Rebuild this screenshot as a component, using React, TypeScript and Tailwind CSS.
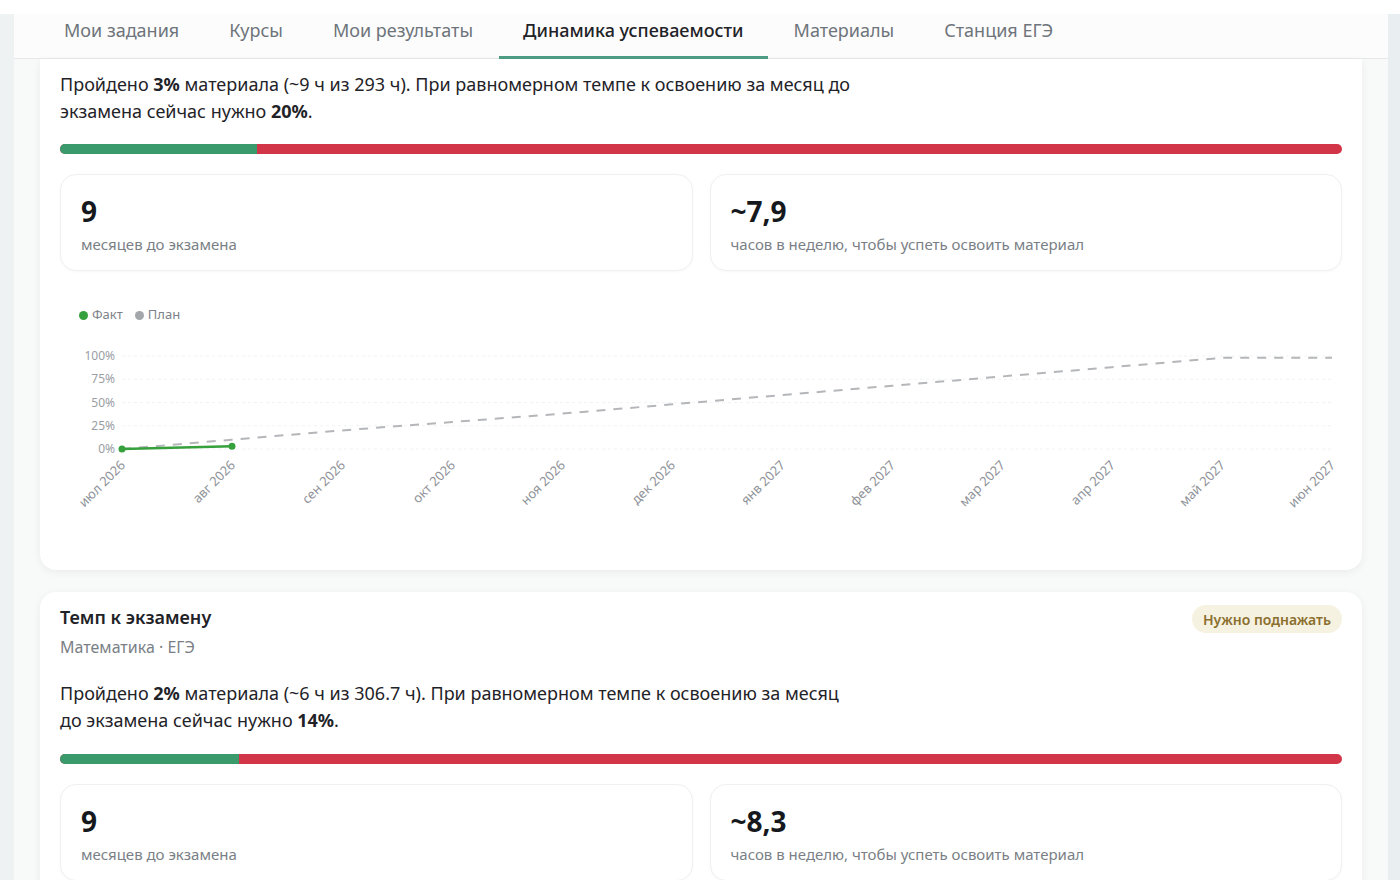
import React from "react";

const FONT = { fontFamily: '"Noto Sans", "Open Sans", Arial, sans-serif' };

const tabs = [
  "Мои задания",
  "Курсы",
  "Мои результаты",
  "Динамика успеваемости",
  "Материалы",
  "Станция ЕГЭ",
];

const months = [
  "июл 2026",
  "авг 2026",
  "сен 2026",
  "окт 2026",
  "ноя 2026",
  "дек 2026",
  "янв 2027",
  "фев 2027",
  "мар 2027",
  "апр 2027",
  "май 2027",
  "июн 2027",
];

const plan = [0, 10, 20, 29, 38, 48, 58, 68, 78, 88, 98, 98];
const fact = [0, 3];

function ProgressBar({ done }: { done: number }) {
  return (
    <div className="flex h-[10px] w-full overflow-hidden rounded-full bg-[#d23547]">
      <div className="h-full bg-[#3b9a6c]" style={{ width: `${done}%` }} />
    </div>
  );
}

function StatCard({ value, label }: { value: string; label: string }) {
  return (
    <div className="flex h-[97px] flex-col rounded-2xl border border-[#eef0f2] bg-white px-5 pt-[19px] shadow-[0_1px_3px_rgba(0,0,0,0.03)]">
      <div className="text-[28px] font-bold leading-[34px] text-[#15181c]">{value}</div>
      <div className="mt-[6px] text-[15px] leading-[20px] text-[#7a7f86]">{label}</div>
    </div>
  );
}

function Chart() {
  const W = 1282;
  const H = 200;
  const x0 = 62;
  const step = 110;
  const yTop = 26; // 100%
  const yZero = 119; // 0%
  const yOf = (v: number) => yZero - ((yZero - yTop) * v) / 100;
  const xOf = (i: number) => x0 + i * step;
  const planPath = plan.map((v, i) => `${i === 0 ? "M" : "L"}${xOf(i)},${yOf(v)}`).join(" ");
  const factPath = fact.map((v, i) => `${i === 0 ? "M" : "L"}${xOf(i)},${yOf(v)}`).join(" ");
  return (
    <svg width={W} height={H} viewBox={`0 0 ${W} ${H}`} className="block">
      {[100, 75, 50, 25, 0].map((t) => (
        <g key={t}>
          <line
            x1={x0}
            x2={xOf(11)}
            y1={yOf(t)}
            y2={yOf(t)}
            stroke="#f1f2f3"
            strokeWidth={1}
            strokeDasharray="3 3"
          />
          <text
            x={x0 - 7}
            y={yOf(t) + 4}
            textAnchor="end"
            fontSize={12}
            fill="#9a9ea4"
            style={FONT}
          >
            {t}%
          </text>
        </g>
      ))}
      <path d={planPath} fill="none" stroke="#b4b6b9" strokeWidth={2} strokeDasharray="9 8" />
      <path d={factPath} fill="none" stroke="#36a03c" strokeWidth={2.5} />
      {fact.map((v, i) => (
        <circle key={i} cx={xOf(i)} cy={yOf(v)} r={3.5} fill="#36a03c" />
      ))}
      {months.map((m, i) => (
        <text
          key={m}
          x={xOf(i) + 4}
          y={yZero + 17}
          textAnchor="end"
          fontSize={13}
          fill="#8f9399"
          transform={`rotate(-45 ${xOf(i) + 4} ${yZero + 17})`}
          style={FONT}
        >
          {m}
        </text>
      ))}
    </svg>
  );
}

export default function App() {
  return (
    <div className="h-[880px] w-[1400px] overflow-hidden bg-white text-[#1f2328]" style={FONT}>
      <div className="h-[14px] bg-white" />
      <div className="flex h-[866px]">
        <div className="w-[14px] bg-[#eef2f3]" />
        <div className="flex w-[1374px] flex-col bg-[#f8f9f9]">
          {/* tabs */}
          <div className="flex h-[45px] shrink-0 items-stretch border-b border-[#e6e8ea] bg-[#fcfcfc] pl-[26px]">
            {tabs.map((t) => {
              const active = t === "Динамика успеваемости";
              return (
                <div
                  key={t}
                  className={
                    active
                      ? "relative mr-[2px] flex items-center px-6 pb-[11px] text-[18px] font-medium text-[#1f2328]"
                      : "relative mr-[2px] flex items-center px-6 pb-[11px] text-[18px] text-[#6e747b]"
                  }
                >
                  {t}
                  {active && (
                    <div className="absolute bottom-[-1px] left-0 right-0 h-[3px] bg-[#4c9c84]" />
                  )}
                </div>
              );
            })}
          </div>

          <div className="flex flex-col px-[26px]">
            {/* first pace card, scrolled under the tabs */}
            <div className="rounded-b-2xl bg-white px-5 pb-10 pt-3 shadow-[0_2px_8px_rgba(0,0,0,0.06)]">
              <p className="text-[18px] leading-[27px] text-[#1f2328]">
                Пройдено <b>3%</b> материала (~9 ч из 293 ч). При равномерном темпе к освоению за месяц до
                <br />
                экзамена сейчас нужно <b>20%</b>.
              </p>
              <div className="mt-[19px]">
                <ProgressBar done={15.4} />
              </div>
              <div className="mt-5 grid grid-cols-2 gap-[17px]">
                <StatCard value="9" label="месяцев до экзамена" />
                <StatCard value="~7,9" label="часов в неделю, чтобы успеть освоить материал" />
              </div>
              <div className="mt-[36px] flex h-4 items-center gap-[12px] pl-[19px] text-[13px] text-[#7d828a]">
                <div className="flex items-center gap-[4px]">
                  <span className="h-[9px] w-[9px] rounded-full bg-[#36a03c]" />
                  Факт
                </div>
                <div className="flex items-center gap-[4px]">
                  <span className="h-[9px] w-[9px] rounded-full bg-[#a3a6aa]" />
                  План
                </div>
              </div>
              <div className="mt-[7px]">
                <Chart />
              </div>
            </div>

            {/* second pace card */}
            <div className="mt-[22px] rounded-2xl bg-white px-5 pb-8 pt-3 shadow-[0_2px_8px_rgba(0,0,0,0.06)]">
              <div className="flex items-start justify-between">
                <div>
                  <div className="text-[18px] font-semibold leading-[26px] text-[#1f2328]">
                    Темп к экзамену
                  </div>
                  <div className="mt-[6px] text-[16px] leading-[22px] text-[#7a7f86]">
                    Математика · ЕГЭ
                  </div>
                </div>
                <div className="mt-[1px] flex h-[28px] items-center rounded-full bg-[#f6f2e2] px-[11px] text-[14px] font-semibold text-[#8b6f2e]">
                  Нужно поднажать
                </div>
              </div>
              <p className="mt-[22px] text-[18px] leading-[27px] text-[#1f2328]">
                Пройдено <b>2%</b> материала (~6 ч из 306.7 ч). При равномерном темпе к освоению за месяц
                <br />
                до экзамена сейчас нужно <b>14%</b>.
              </p>
              <div className="mt-[20px]">
                <ProgressBar done={14} />
              </div>
              <div className="mt-5 grid grid-cols-2 gap-[17px]">
                <StatCard value="9" label="месяцев до экзамена" />
                <StatCard value="~8,3" label="часов в неделю, чтобы успеть освоить материал" />
              </div>
            </div>
          </div>
        </div>
        <div className="w-[12px] bg-[#e9eff0]" />
      </div>
    </div>
  );
}
